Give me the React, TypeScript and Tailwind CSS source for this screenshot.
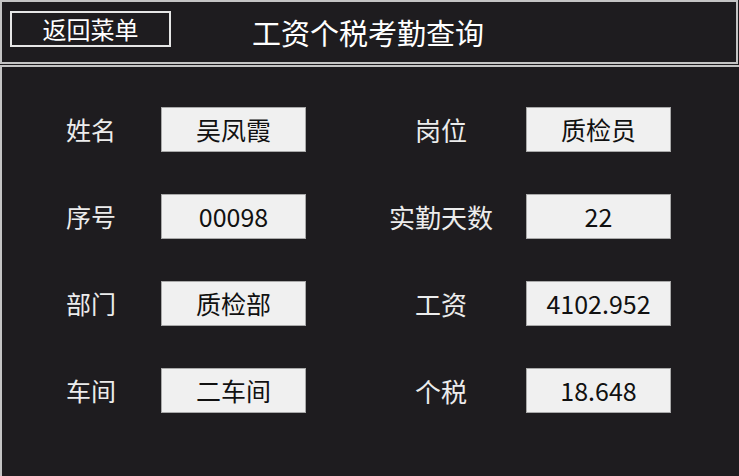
const fields: [string, string, string, string][] = [
  ['姓名', '吴凤霞', '岗位', '质检员'],
  ['序号', '00098', '实勤天数', '22'],
  ['部门', '质检部', '工资', '4102.952'],
  ['车间', '二车间', '个税', '18.648'],
];

function Field({ value }: { value: string }) {
  return (
    <div className="flex h-[45px] w-[145px] items-center justify-center border border-[#a9a9a9] bg-[#f0f0f0] text-[25px] leading-none text-[#111]">
      {value}
    </div>
  );
}

export default function App() {
  return (
    <div
      className="h-[476px] w-[739px] overflow-hidden bg-[#1e1c1f] text-[#ececec]"
      style={{ fontFamily: '"Noto Sans CJK SC", "Noto Sans", sans-serif' }}
    >
      {/* Header */}
      <div className="flex h-[64px] w-[738px] items-start border-2 border-[#c4c4c4] bg-[#1e1c1f]">
        <button className="ml-[8px] mt-[9px] flex h-[36px] w-[161px] items-center justify-center border-2 border-[#e6e6e6] text-[24px] leading-none text-white">
          返回菜单
        </button>
        <div className="ml-[81px] mt-[16px] text-[29px] leading-none text-white">工资个税考勤查询</div>
      </div>

      {/* Body */}
      <div className="mt-[1px] h-[420px] border-l-2 border-t-2 border-[#c4c4c4] pt-[40px]">
        <div className="flex flex-col gap-[42px]">
          {fields.map(([l1, v1, l2, v2]) => (
            <div key={l1} className="flex items-center pl-[24px]">
              <div className="w-[130px] text-center text-[25px] leading-none">{l1}</div>
              <div className="ml-[5px]">
                <Field value={v1} />
              </div>
              <div className="ml-[70px] w-[130px] text-center text-[26px] leading-none">{l2}</div>
              <div className="ml-[20px]">
                <Field value={v2} />
              </div>
            </div>
          ))}
        </div>
      </div>
    </div>
  );
}
